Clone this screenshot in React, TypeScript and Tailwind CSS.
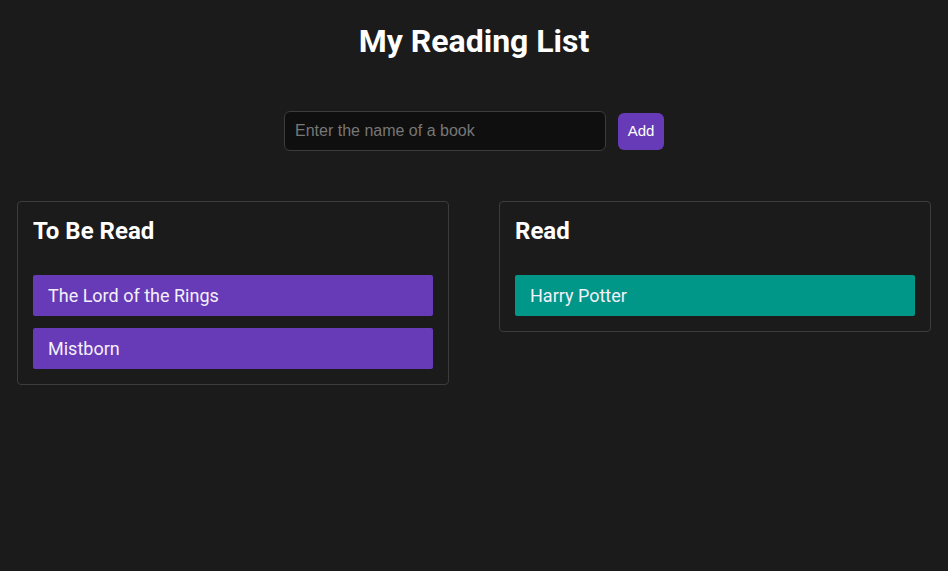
const toRead = ["The Lord of the Rings", "Mistborn"];
const read = ["Harry Potter"];

function Shelf({ title, books, color }: { title: string; books: string[]; color: string }) {
  return (
    <div className="w-[432px] rounded border border-[#3c3c3c] px-[15px] pt-[15px] pb-[15px]">
      <h2 className="text-[24px] font-bold leading-[29px] text-white mb-[29px]">{title}</h2>
      <div className="flex flex-col gap-3">
        {books.map((b) => (
          <div key={b} className={`h-[41px] rounded-[2px] pl-[15px] flex items-center text-[18px] text-[#f4f0fa] ${color}`}>
            {b}
          </div>
        ))}
      </div>
    </div>
  );
}

export default function App() {
  return (
    <div className="min-h-[571px] bg-[#1b1b1b] font-['Roboto',sans-serif] px-[17px]">
      <h1 className="pt-[21px] text-center text-[32px] font-bold leading-[40px] text-white">My Reading List</h1>
      <div className="mt-[50px] flex justify-center items-center gap-3">
        <input
          className="w-[322px] h-[40px] rounded-md border border-[#3c3c3c] bg-[#0f0f0f] px-[10px] text-[16px] font-['Liberation_Sans',sans-serif] text-white placeholder:text-[#777] outline-none"
          placeholder="Enter the name of a book"
        />
        <button className="h-[37px] w-[46px] rounded-md bg-[#673ab7] text-[15px] font-['Liberation_Sans',sans-serif] text-white">
          Add
        </button>
      </div>
      <div className="mt-[50px] flex items-start gap-[50px]">
        <Shelf title="To Be Read" books={toRead} color="bg-[#673ab7]" />
        <Shelf title="Read" books={read} color="bg-[#009688]" />
      </div>
    </div>
  );
}
